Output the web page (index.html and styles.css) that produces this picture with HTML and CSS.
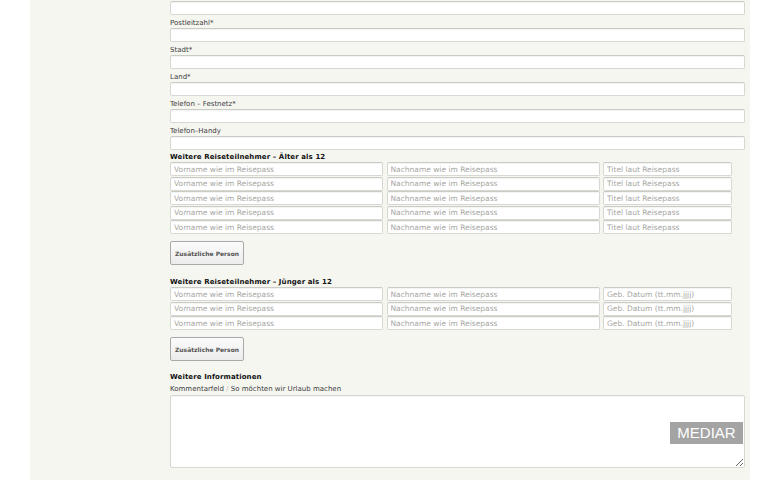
FILE: index.html
```html
<!DOCTYPE html>
<html lang="de">
<head>
<meta charset="utf-8">
<title>Reiseanmeldung</title>
<link rel="stylesheet" href="styles.css">
</head>
<body>
<div class="page">
  <div class="panel">
    <form class="form">
      <input class="field first" type="text">
      <label class="label">Postleitzahl*</label>
      <input class="field" type="text">
      <label class="label">Stadt*</label>
      <input class="field" type="text">
      <label class="label">Land*</label>
      <input class="field" type="text">
      <label class="label">Telefon – Festnetz*</label>
      <input class="field" type="text">
      <label class="label">Telefon–Handy</label>
      <input class="field" type="text">

      <h3 class="heading">Weitere Reiseteilnehmer – Älter als 12</h3>
      <div class="grid">
        <input class="cell" placeholder="Vorname wie im Reisepass"><input class="cell" placeholder="Nachname wie im Reisepass"><input class="cell" placeholder="Titel laut Reisepass">
        <input class="cell" placeholder="Vorname wie im Reisepass"><input class="cell" placeholder="Nachname wie im Reisepass"><input class="cell" placeholder="Titel laut Reisepass">
        <input class="cell" placeholder="Vorname wie im Reisepass"><input class="cell" placeholder="Nachname wie im Reisepass"><input class="cell" placeholder="Titel laut Reisepass">
        <input class="cell" placeholder="Vorname wie im Reisepass"><input class="cell" placeholder="Nachname wie im Reisepass"><input class="cell" placeholder="Titel laut Reisepass">
        <input class="cell" placeholder="Vorname wie im Reisepass"><input class="cell" placeholder="Nachname wie im Reisepass"><input class="cell" placeholder="Titel laut Reisepass">
      </div>
      <button class="btn" type="button">Zusätzliche Person</button>

      <h3 class="heading second">Weitere Reiseteilnehmer – Jünger als 12</h3>
      <div class="grid">
        <input class="cell" placeholder="Vorname wie im Reisepass"><input class="cell" placeholder="Nachname wie im Reisepass"><input class="cell" placeholder="Geb. Datum (tt.mm.jjjj)">
        <input class="cell" placeholder="Vorname wie im Reisepass"><input class="cell" placeholder="Nachname wie im Reisepass"><input class="cell" placeholder="Geb. Datum (tt.mm.jjjj)">
        <input class="cell" placeholder="Vorname wie im Reisepass"><input class="cell" placeholder="Nachname wie im Reisepass"><input class="cell" placeholder="Geb. Datum (tt.mm.jjjj)">
      </div>
      <button class="btn" type="button">Zusätzliche Person</button>

      <h3 class="heading third">Weitere Informationen</h3>
      <label class="label comment">Kommentarfeld <span class="slash">/</span> So möchten wir Urlaub machen</label>
      <div class="area-wrap">
        <textarea class="area"></textarea>
        <span class="badge">MEDIAR</span>
      </div>
    </form>
  </div>
</div>
</body>
</html>
```

FILE: styles.css
```css
html, body {
  margin: 0;
  padding: 0;
  background: #ffffff;
}
body {
  font-family: "DejaVu Sans", Verdana, sans-serif;
  color: #333;
  overflow: hidden;
  height: 480px;
}
.page {
  padding-left: 30px;
  width: 720px;
  height: 480px;
}
.panel {
  background: #f6f6f1;
  height: 480px;
  padding-left: 140px;
  padding-right: 5px;
  box-sizing: border-box;
}
.form {
  display: flex;
  flex-direction: column;
  align-items: flex-start;
  padding-top: 1px;
}
.field {
  display: block;
  width: 575px;
  height: 14px;
  box-sizing: border-box;
  border: 1px solid #d8d8d2;
  border-top-color: #cbcbc6;
  box-shadow: inset 0 1px 1px rgba(0, 0, 0, 0.05);
  background: #fff;
  border-radius: 2px;
  margin: 0;
  padding: 0;
}
.label {
  display: block;
  font-size: 7px;
  line-height: 10px;
  padding-top: 3px;
  height: 13px;
  box-sizing: border-box;
  color: #3c3c3c;
}
.heading {
  margin: 0;
  font-size: 7px;
  font-weight: bold;
  line-height: 12px;
  height: 12px;
  padding-top: 1px;
  box-sizing: border-box;
  color: #111;
  letter-spacing: 0.1px;
}
.heading.second {
  margin-top: 10px;
}
.heading.third {
  margin-top: 10px;
  height: 12px;
  line-height: 12px;
  padding-top: 0;
}
.grid {
  display: grid;
  grid-template-columns: 213px 213px 129px;
  column-gap: 3.5px;
  row-gap: 0.5px;
}
.cell {
  height: 14px;
  box-sizing: border-box;
  border: 1px solid #d8d8d2;
  border-top-color: #cbcbc6;
  box-shadow: inset 0 1px 1px rgba(0, 0, 0, 0.05);
  border-radius: 2px;
  background: #fff;
  margin: 0;
  padding: 0 3px;
  font-family: "DejaVu Sans", Verdana, sans-serif;
  font-size: 7.5px;
  color: #666;
}
.cell::placeholder {
  color: #a6a6a2;
}
.btn {
  margin-top: 7px;
  width: 74px;
  height: 24px;
  box-sizing: border-box;
  border: 1px solid #a9a9a9;
  border-radius: 2px;
  background: linear-gradient(#fbfbfb, #ececec);
  font-family: "DejaVu Sans", Verdana, sans-serif;
  font-size: 6px;
  font-weight: bold;
  color: #555;
  padding: 0;
}
.comment {
  height: 12px;
  padding-top: 1px;
  line-height: 11px;
}
.slash {
  color: #bbb;
}
.area-wrap {
  position: relative;
  margin-top: 0;
}
.area {
  display: block;
  width: 575px;
  height: 73px;
  box-sizing: border-box;
  border: 1px solid #d8d8d2;
  box-shadow: inset 0 1px 1px rgba(0, 0, 0, 0.05);
  border-radius: 2px;
  background: #fff;
  margin: 0;
  resize: both;
}
.badge {
  position: absolute;
  left: 500px;
  top: 27px;
  width: 73px;
  height: 22px;
  background: #a4a4a4;
  color: #fff;
  font-family: "Liberation Sans", Arial, sans-serif;
  font-size: 15px;
  line-height: 22px;
  text-align: center;
}
```
